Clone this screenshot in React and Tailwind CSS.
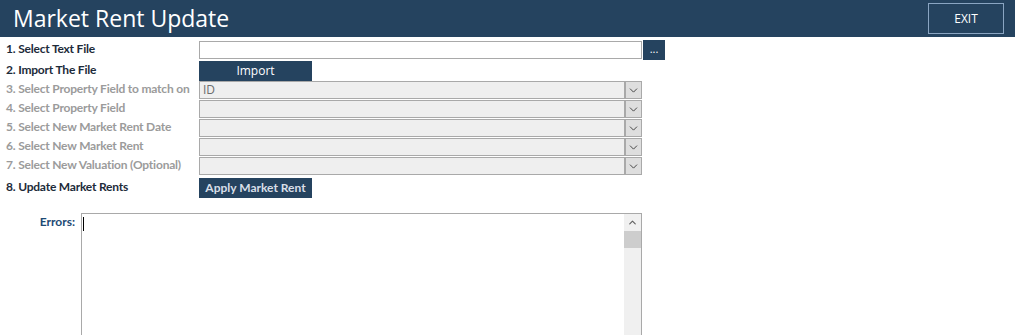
import { ChevronDown, ChevronUp } from "lucide-react"

const rows = [
  { label: "3. Select Property Field to match on", value: "ID" },
  { label: "4. Select Property Field", value: "" },
  { label: "5. Select New Market Rent Date", value: "" },
  { label: "6. Select New Market Rent", value: "" },
  { label: "7. Select New Valuation (Optional)", value: "" },
]

const label = "w-[193px] whitespace-nowrap pb-[2px] font-['Lato',sans-serif] text-[12px] font-bold tracking-[-0.2px]"

function Select({ value }) {
  return (
    <div className="flex h-[18px] w-[443px] border border-[#a9a9a9] bg-[#efefef]">
      <div className="flex-1 pl-[3px] text-[12px] leading-[16px] text-[#6d6d6d]">{value}</div>
      <div className="flex w-[17px] items-center justify-center border-l-2 border-[#a9a9a9] bg-[#dedede]">
        <ChevronDown size={13} strokeWidth={1.8} className="text-[#444]" />
      </div>
    </div>
  )
}

export default function App() {
  return (
    <div className="h-[335px] w-[1015px] overflow-hidden bg-white font-['Open_Sans',sans-serif]">
      <div className="flex h-[37px] items-center justify-between bg-[#25435f] pl-[13px] pr-[11px]">
        <h1 className="text-[23px] leading-none text-white">Market Rent Update</h1>
        <button className="h-[31px] w-[76px] border border-[#8aa5c2] text-[12px] text-white">EXIT</button>
      </div>

      <div className="flex flex-col pl-[6px] pt-[3px]">
        <div className="flex h-[20px] items-center">
          <div className={`${label} text-[#1d2b3a]`}>1. Select Text File</div>
          <div className="h-[18px] w-[443px] border border-[#a9a9a9] bg-white" />
          <button className="ml-[1px] flex h-[20px] w-[22px] items-center justify-center bg-[#25435f] pb-[2px] text-[11px] text-white">...</button>
        </div>
        <div className="flex h-[21px] items-center">
          <div className={`${label} text-[#1d2b3a]`}>2. Import The File</div>
          <button className="h-[20px] w-[113px] bg-[#25435f] text-[12px] text-white">Import</button>
        </div>
        <div className="flex flex-col gap-[1px]">
          {rows.map((r) => (
            <div key={r.label} className="flex h-[18px] items-center">
              <div className={`${label} text-[#9b9b9b]`}>{r.label}</div>
              <Select value={r.value} />
            </div>
          ))}
        </div>
        <div className="mt-[3px] flex h-[20px] items-center">
          <div className={`${label} text-[#1d2b3a]`}>8. Update Market Rents</div>
          <button className="h-[20px] w-[113px] bg-[#25435f] font-['Lato',sans-serif] text-[12px] font-bold text-[#d8dfe8]">Apply Market Rent</button>
        </div>

        <div className="mt-[15px] flex">
          <div className="w-[75px] pr-[6px] text-right font-['Lato',sans-serif] text-[12px] font-bold text-[#1d4a74]">Errors:</div>
          <div className="flex h-[130px] w-[561px] border border-[#a9a9a9] bg-white">
            <div className="flex-1 pl-[1px] pt-[3px]">
              <div className="h-[14px] w-[1px] bg-black" />
            </div>
            <div className="flex w-[17px] flex-col bg-[#f0f0f0]">
              <div className="flex h-[17px] items-center justify-center">
                <ChevronUp size={11} strokeWidth={2.5} className="text-[#606060]" />
              </div>
              <div className="h-[17px] bg-[#cdcdcd]" />
            </div>
          </div>
        </div>
      </div>
    </div>
  )
}
